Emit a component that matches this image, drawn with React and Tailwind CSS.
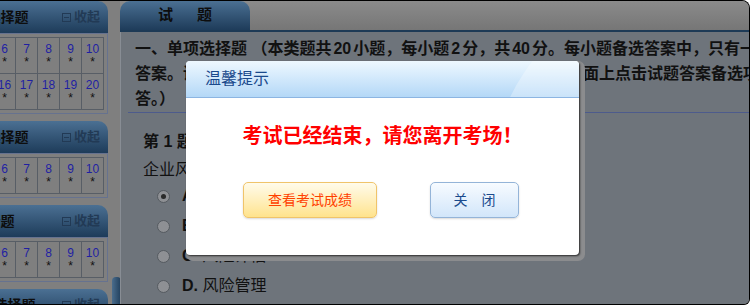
import React from "react";

function Section({ title, count }) {
  const nums = Array.from({ length: count }, (_, i) => i + 1);
  return (
    <div>
      <div className="grid h-[32px] grid-cols-[1fr_auto_1fr] items-center rounded-t-[10px] bg-gradient-to-b from-[#4b7093] to-[#1e3c5a]">
        <span />
        <span className="whitespace-nowrap text-[14px] font-bold text-[#0d0d0d]">{title}</span>
        <span className="flex items-center gap-[3px] justify-self-end pr-[8px] text-[13px] font-bold text-[#223a55]">
          <span className="flex h-[9px] w-[9px] items-center justify-center border border-[#223a55]">
            <span className="h-px w-[5px] bg-[#223a55]" />
          </span>
          收起
        </span>
      </div>
      <div className="border border-[#66728f] p-[3px]">
        <div className="grid grid-cols-10 border-l border-t border-[#585e66]">
          {nums.map((n) => (
            <div
              key={n}
              className="flex h-[36px] flex-col items-center border-b border-r border-[#585e66] pt-[4px]"
            >
              <span className="text-[12px] leading-[14px] text-[#1f1fa3]">{n}</span>
              <span className="text-[12px] leading-[12px] text-[#111]">*</span>
            </div>
          ))}
        </div>
      </div>
    </div>
  );
}

function Radio({ checked }) {
  return (
    <span className="flex h-[13px] w-[13px] items-center justify-center rounded-full border border-[#555a60] bg-[#8e9094]">
      {checked && <span className="h-[5px] w-[5px] rounded-full bg-[#2a2a2a]" />}
    </span>
  );
}

function Option({ letter, text, checked }) {
  return (
    <div className="flex h-[30px] items-center gap-[12px]">
      <Radio checked={checked} />
      <span className="whitespace-nowrap text-[16px] text-[#111]">
        <span className="font-bold">{letter}.</span> {text}
      </span>
    </div>
  );
}

function Dialog() {
  return (
    <div className="absolute left-[186px] top-[60px] h-[194px] w-[393px] rounded-[4px] bg-white shadow-[1px_1px_2px_rgba(0,0,0,0.7),3px_3px_0_3px_#8b8c8e]">
      <div className="relative flex h-[37px] items-center overflow-hidden rounded-t-[4px] border-b border-[#8cb5e2] bg-gradient-to-b from-[#eef8ff] to-[#b4d8f7] pl-[19px]">
        <div className="absolute left-[305px] top-[-74px] h-[388px] w-[388px] rounded-full bg-white/30" />
        <span className="relative text-[16px] text-[#1a4a8c]">温馨提示</span>
      </div>
      <div className="flex flex-col">
        <p className="mt-[25px] text-center text-[20px] font-bold leading-[27px] text-[#ff0000]">
          考试已经结束，请您离开考场！
        </p>
        <div className="mt-[32px] flex gap-[53px] pl-[57px]">
          <button className="flex h-[36px] w-[134px] items-center justify-center rounded-[5px] border border-[#f0c46a] bg-gradient-to-b from-[#fffbea] to-[#ffe38c] text-[14px] text-[#ff4000] shadow-[0_1px_2px_rgba(0,0,0,0.15)]">
            查看考试成绩
          </button>
          <button className="flex h-[36px] w-[89px] items-center justify-center rounded-[5px] border border-[#94b4d8] bg-gradient-to-b from-[#f7fbff] to-[#d2e6fa] text-[14px] text-[#1a4a8c] shadow-[0_1px_2px_rgba(0,0,0,0.15)]">
            关　闭
          </button>
        </div>
      </div>
    </div>
  );
}

function Num({ children }) {
  return <span className="mx-[2px]">{children}</span>;
}

export default function App() {
  return (
    <div className="relative h-[305px] w-[750px] overflow-hidden rounded-br-[6px] rounded-tr-[8px] border-b border-r border-t border-black bg-[#7f7f7f] font-['Liberation_Sans','Noto_Sans_CJK_SC',sans-serif]">
      <div className="flex h-full">
        <div className="w-[108px] shrink-0 overflow-hidden">
          <div className="ml-[-121px] flex w-[229px] flex-col gap-[7px]">
            <Section title="单项选择题" count={20} />
            <Section title="多项选择题" count={10} />
            <Section title="判断题" count={10} />
            <Section title="不定项选择题" count={10} />
          </div>
        </div>

        <div className="flex w-[12px] shrink-0 flex-col justify-end">
          <div className="ml-[4px] h-[27px] w-[9px] rounded-t-[4px] bg-gradient-to-r from-[#4a6d8d] to-[#213f5c]" />
        </div>

        <div className="flex min-w-0 flex-1 flex-col">
          <div className="flex h-[29px] shrink-0 items-stretch bg-gradient-to-b from-[#8b8b8b] to-[#767676]">
            <div className="flex w-[130px] items-center justify-center gap-[24px] rounded-t-[10px] bg-gradient-to-b from-[#4b7093] to-[#1e3c5a] text-[15px] font-bold text-[#0d0d0d]">
              <span>试</span>
              <span>题</span>
            </div>
          </div>
          <div className="h-[2px] shrink-0 bg-[#1d3a56]" />
          <div className="min-h-0 flex-1 overflow-hidden border-l border-[#888d94] bg-[#6e747b]">
            <div className="whitespace-nowrap pl-[14px] pt-[4px] text-[16px] font-bold leading-[25px] text-[#111]">
              <div>
                一、单项选择题 （本类题共<Num>20</Num>小题，每小题<Num>2</Num>分，共<Num>40</Num>分。每小题备选答案中，只有一个符合题意的正确
              </div>
              <div>答案。请使用计算机鼠标在计算机答题区域内，在计算机答题界面上点击试题答案备选项前的按钮“○”作</div>
              <div>答。）</div>
            </div>
            <div className="ml-[7px] mt-[1px] border-t border-[#4d5b8c]" />
            <div className="pl-[22px] pt-[15px] text-[16px] text-[#111]">
              <div className="whitespace-nowrap font-bold leading-[28px]">第 1 题 【单选题】</div>
              <div className="whitespace-nowrap leading-[28px]">企业风险管理的核心是（ ）。</div>
              <div className="-mt-[3px] pl-[14px]">
                <Option letter="A" text="风险识别" checked />
                <Option letter="B" text="风险分析" />
                <Option letter="C" text="风险评估" />
                <Option letter="D" text="风险管理" />
              </div>
            </div>
          </div>
        </div>
      </div>
      <Dialog />
    </div>
  );
}
